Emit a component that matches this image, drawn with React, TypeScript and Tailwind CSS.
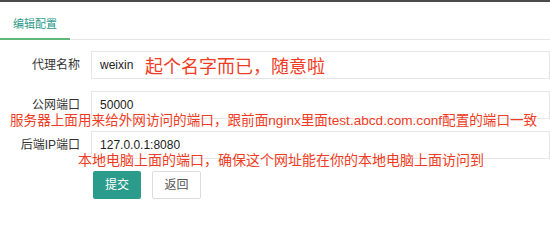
const font = "font-['Liberation_Sans','Noto_Sans_CJK_SC',sans-serif]";

function Row({ label, value }: { label: string; value: string }) {
  return (
    <div className="flex items-center h-[28px]">
      <label className="w-[82px] text-right text-[12px] text-[#333]">{label}</label>
      <div className="ml-[11px] w-[470px] h-[28px] border border-[#e6e6e6] flex items-center pl-[8px] text-[12px] text-[#222]">
        {value}
      </div>
    </div>
  );
}

export default function App() {
  return (
    <div className={`relative w-[550px] h-[229px] overflow-hidden bg-white border-t-2 border-[#4b4b4b] ${font}`}>
      {/* tab bar */}
      <div className="flex h-[38px] border-b border-[#e6e6e6]">
        <div className="w-[70px] -mb-px pl-[13px] pt-[14px] text-[11px] text-[#2a9a8a] border-b-2 border-[#5fb878]">
          编辑配置
        </div>
      </div>

      {/* form */}
      <div className="pt-[11px] flex flex-col gap-[12px]">
        <Row label="代理名称" value="weixin" />
        <Row label="公网端口" value="50000" />
        <Row label="后端IP端口" value="127.0.0.1:8080" />
        <div className="flex ml-[93px] gap-[11px]">
          <button className="w-[48px] h-[28px] rounded-[2px] bg-[#2b9c8b] text-white text-[12px]">提交</button>
          <button className="w-[49px] h-[28px] rounded-[2px] bg-white border border-[#dcdcdc] text-[#555] text-[12px]">返回</button>
        </div>
      </div>

      {/* annotations drawn over the form */}
      <div className="absolute left-[145px] top-[55px] text-[18px] leading-[20px] text-[#f03c24] whitespace-nowrap">
        起个名字而已，随意啦
      </div>
      <div className="absolute left-[10px] top-[110px] text-[13.6px] leading-[17px] text-[#f03c24] whitespace-nowrap">
        服务器上面用来给外网访问的端口，跟前面nginx里面test.abcd.com.conf配置的端口一致
      </div>
      <div className="absolute left-[78px] top-[150px] text-[14px] leading-[17px] text-[#f03c24] whitespace-nowrap">
        本地电脑上面的端口，确保这个网址能在你的本地电脑上面访问到
      </div>
    </div>
  );
}
